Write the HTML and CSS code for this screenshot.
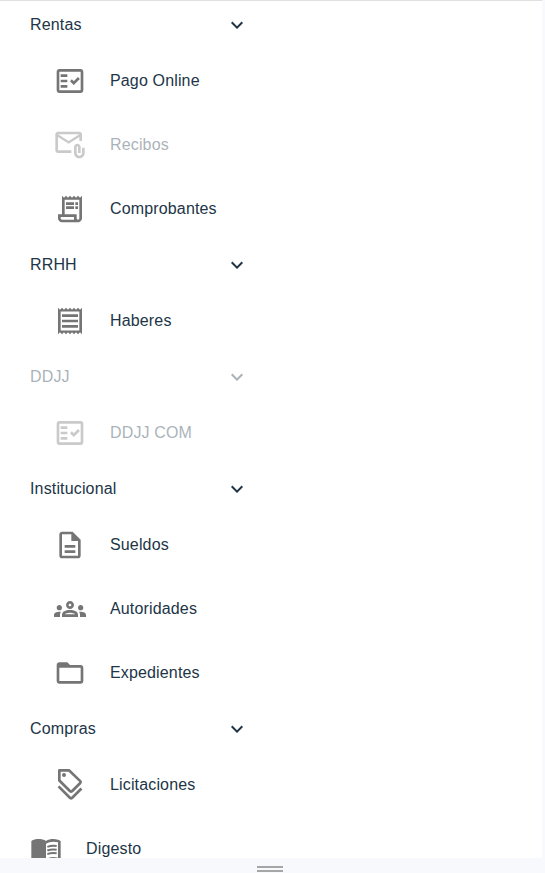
FILE: index.html
```html
<!DOCTYPE html>
<html lang="es">
<head>
<meta charset="utf-8">
<title>Menú</title>
<link rel="stylesheet" href="styles.css">
</head>
<body>
<svg width="0" height="0" class="defs">
  <symbol id="chevron" viewBox="0 0 24 24"><path d="M7.41 8.59 12 13.17l4.59-4.58L18 10l-6 6-6-6z"/></symbol>
  <symbol id="fact" viewBox="0 0 24 24"><path fill-rule="evenodd" d="M20 3H4c-1.1 0-2 .9-2 2v14c0 1.1.9 2 2 2h16c1.1 0 2-.9 2-2V5c0-1.1-.9-2-2-2zm0 16H4V5h16v14z"/><path d="M19.41 10.42 17.99 9l-3.17 3.17-1.41-1.42L12 12.16 14.82 15zM5 7h5v2H5zm0 4h5v2H5zm0 4h5v2H5z"/></symbol>
  <symbol id="mail" viewBox="0 0 24 24"><path fill-rule="evenodd" d="M3 16V6l8 5 8-5v3h2V4c0-1.1-.9-2-2-2H3c-1.1 0-2 .9-2 2v12c0 1.1.9 2 2 2h10v-2H3zM19 4l-8 5-8-5h16z"/><path d="M21 14v4c0 1.1-.9 2-2 2s-2-.9-2-2v-4.5c0-.28.22-.5.5-.5s.5.22.5.5V18h2v-4.5c0-1.38-1.12-2.5-2.5-2.5S15 12.12 15 13.5V18c0 2.21 1.79 4 4 4s4-1.79 4-4v-4h-2z"/></symbol>
  <symbol id="long" viewBox="0 0 24 24"><path d="M19.5 3.5 18 2l-1.5 1.5L15 2l-1.5 1.5L12 2l-1.5 1.5L9 2 7.5 3.5 6 2v14H3v3c0 1.66 1.34 3 3 3h12c1.66 0 3-1.34 3-3V2l-1.5 1.5zM15 20H6c-.55 0-1-.45-1-1v-1h10v2zm4-1c0 .55-.45 1-1 1s-1-.45-1-1v-3H8V5h11v14z"/><path d="M9 7h6v2H9zm7 0h2v2h-2zm-7 3h6v2H9zm7 0h2v2h-2z"/></symbol>
  <symbol id="receipt" viewBox="0 0 24 24"><path fill-rule="evenodd" d="M19.5 3.5 18 2l-1.5 1.5L15 2l-1.5 1.5L12 2l-1.5 1.5L9 2 7.5 3.5 6 2 4.5 3.5 3 2v20l1.5-1.5L6 22l1.5-1.5L9 22l1.5-1.5L12 22l1.5-1.5L15 22l1.5-1.5L18 22l1.5-1.5L21 22V2l-1.5 1.5zM19 19.09H5V4.91h14v14.18z"/><path d="M6 15h12v2H6zm0-4h12v2H6zm0-4h12v2H6z"/></symbol>
  <symbol id="doc" viewBox="0 0 24 24"><path d="M8 16h8v2H8zm0-4h8v2H8zm6-10H6c-1.1 0-2 .9-2 2v16c0 1.1.89 2 1.99 2H18c1.1 0 2-.9 2-2V8l-6-6zm4 18H6V4h7v5h5v11z"/></symbol>
  <symbol id="groups" viewBox="0 0 24 24"><path d="M4 13c1.1 0 2-.9 2-2s-.9-2-2-2-2 .9-2 2 .9 2 2 2zm1.13 1.1c-.37-.06-.74-.1-1.13-.1-.99 0-1.93.21-2.78.58C.48 14.9 0 15.62 0 16.43V18h4.5v-1.61c0-.83.23-1.61.63-2.29zM20 13c1.1 0 2-.9 2-2s-.9-2-2-2-2 .9-2 2 .9 2 2 2zm4 3.43c0-.81-.48-1.53-1.22-1.85-.85-.37-1.79-.58-2.78-.58-.39 0-.76.04-1.13.1.4.68.63 1.46.63 2.29V18H24v-1.57zm-7.76-2.78c-1.17-.52-2.61-.9-4.24-.9s-3.07.39-4.24.9C6.68 14.13 6 15.21 6 16.39V18h12v-1.61c0-1.18-.68-2.26-1.76-2.74zM8.07 16c.09-.23.13-.39.91-.69.97-.38 1.99-.56 3.02-.56s2.05.18 3.02.56c.77.3.81.46.91.69H8.07zM12 8c.55 0 1 .45 1 1s-.45 1-1 1-1-.45-1-1 .45-1 1-1m0-2c-1.66 0-3 1.34-3 3s1.34 3 3 3 3-1.34 3-3-1.34-3-3-3z"/></symbol>
  <symbol id="folder" viewBox="0 0 24 24"><path d="M20 6h-8l-2-2H4c-1.1 0-1.99.9-1.99 2L2 18c0 1.1.9 2 2 2h16c1.1 0 2-.9 2-2V8c0-1.1-.9-2-2-2zm0 12H4V8h16v10z"/></symbol>
  <symbol id="tags" viewBox="0 0 24 24"><path fill="none" stroke="currentColor" stroke-width="2" stroke-linejoin="round" d="M4 1h7.2l8.5 8.1q.6.7 0 1.4l-6.2 6.2q-.7.6-1.4 0L4 8.6zM3.4 13l8.7 8.7q.7.6 1.4 0l7.1-7.1"/><circle cx="7.5" cy="4.5" r="1.5"/></symbol>
  <symbol id="book" viewBox="0 0 24 24"><path d="M21 5c-1.11-.35-2.33-.5-3.5-.5-1.95 0-4.05.4-5.5 1.5-1.45-1.1-3.55-1.5-5.5-1.5S2.45 4.9 1 6v14.65c0 .25.25.5.5.5.1 0 .15-.05.25-.05C3.1 20.45 5.05 20 6.5 20c1.95 0 4.05.4 5.5 1.5 1.35-.85 3.8-1.5 5.5-1.5 1.65 0 3.35.3 4.75 1.05.1.05.15.05.25.05.25 0 .5-.25.5-.5V6c-.6-.45-1.25-.75-2-1zm0 13.5c-1.1-.35-2.3-.5-3.5-.5-1.7 0-4.15.65-5.5 1.5V8c1.35-.85 3.8-1.5 5.5-1.5 1.2 0 2.4.15 3.5.5v11.5z"/><path fill="none" stroke="currentColor" stroke-width="1.5" d="M13 10.4q3.2-1.2 7-.6M13 13.1q3.2-1.2 7-.6M13 15.8q3.2-1.2 7-.6"/></symbol>
</svg>
<div class="page">
  <nav class="menu">
    <div class="heading"><span>Rentas</span><svg class="chevron"><use href="#chevron"/></svg></div>
    <div class="item"><svg class="icon"><use href="#fact"/></svg><span>Pago Online</span></div>
    <div class="item disabled"><svg class="icon"><use href="#mail"/></svg><span>Recibos</span></div>
    <div class="item"><svg class="icon"><use href="#long"/></svg><span>Comprobantes</span></div>
    <div class="heading"><span>RRHH</span><svg class="chevron"><use href="#chevron"/></svg></div>
    <div class="item"><svg class="icon"><use href="#receipt"/></svg><span>Haberes</span></div>
    <div class="heading disabled"><span>DDJJ</span><svg class="chevron"><use href="#chevron"/></svg></div>
    <div class="item disabled"><svg class="icon"><use href="#fact"/></svg><span>DDJJ COM</span></div>
    <div class="heading"><span>Institucional</span><svg class="chevron"><use href="#chevron"/></svg></div>
    <div class="item"><svg class="icon"><use href="#doc"/></svg><span>Sueldos</span></div>
    <div class="item"><svg class="icon"><use href="#groups"/></svg><span>Autoridades</span></div>
    <div class="item"><svg class="icon"><use href="#folder"/></svg><span>Expedientes</span></div>
    <div class="heading"><span>Compras</span><svg class="chevron"><use href="#chevron"/></svg></div>
    <div class="item"><svg class="icon"><use href="#tags"/></svg><span>Licitaciones</span></div>
    <div class="item root"><svg class="icon"><use href="#book"/></svg><span>Digesto</span></div>
  </nav>
  <footer class="resizer"><div class="grip"></div></footer>
</div>
</body>
</html>
```

FILE: styles.css
```css
* { box-sizing: border-box; }
body {
  margin: 0;
  background: #f8f9fd;
  color: #213547;
  font: 16px/24px "Liberation Sans", Arial, sans-serif;
  letter-spacing: 0.15px;
  overflow: hidden;
}
.defs { display: none; }
svg { fill: currentColor; flex: none; }
.page { height: 873px; display: flex; flex-direction: column; }
.menu {
  width: 542px;
  height: 858px;
  flex: none;
  overflow: hidden;
  background: #fff;
  border-top: 1px solid #e0e0e0;
}
.heading, .item { display: flex; align-items: center; }
.heading {
  width: 249px;
  height: 48px;
  padding-left: 30px;
  justify-content: space-between;
}
.item { height: 64px; padding-left: 54px; gap: 24px; }
.root { padding-left: 30px; }
.heading span, .item span { margin-top: -1px; }
.icon { width: 32px; height: 32px; color: #757575; }
.chevron { width: 24px; height: 24px; }
.disabled { opacity: 0.38; }
.resizer { flex: 1; display: flex; justify-content: center; padding: 8px 5px 0 0; }
.grip {
  width: 26px;
  height: 6px;
  border-top: 2px solid #a6a6a6;
  border-bottom: 2px solid #a6a6a6;
}
```
